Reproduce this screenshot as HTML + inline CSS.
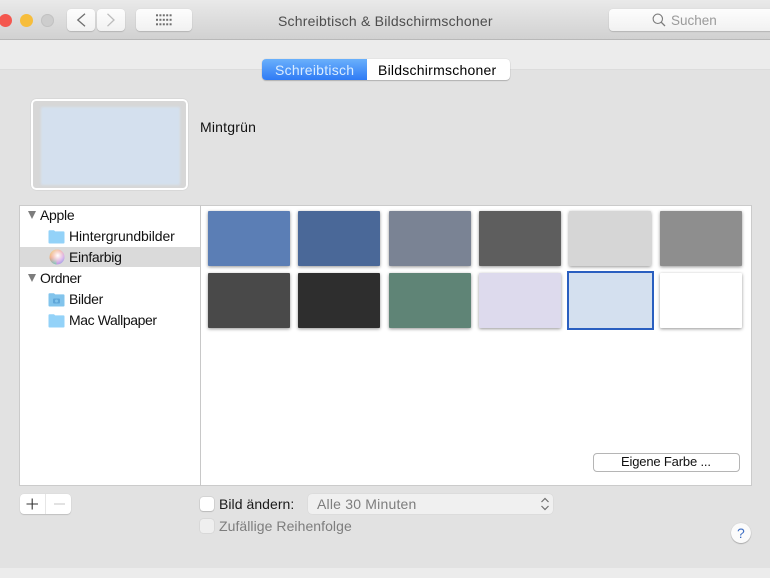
<!DOCTYPE html>
<html lang="de">
<head>
<meta charset="utf-8">
<title>Schreibtisch &amp; Bildschirmschoner</title>
<style>
html,body{margin:0;padding:0;background:#e2e2e2;}
#p{position:relative;width:770px;height:578px;overflow:hidden;background:#e2e2e2;font-family:"Liberation Sans",sans-serif;font-size:14px;color:#111;filter:blur(.35px);}
#p div,#p span.t,#p svg{position:absolute;}
.t{white-space:nowrap;line-height:16px;}
.btn{background:linear-gradient(#fdfdfd,#f1f1f1);border-radius:4px;box-shadow:0 1px 1px rgba(0,0,0,.14),0 0 1px rgba(0,0,0,.1);}
.sw{width:82px;height:55px;border-radius:1px;box-shadow:0 1px 3px rgba(0,0,0,.42);}
.dot{border-radius:50%;width:13px;height:13px;top:13.5px;}
.tri{width:0;height:0;border-left:4px solid transparent;border-right:4px solid transparent;border-top:8px solid #7d7d7d;}
</style>
</head>
<body>
<div id="p">
  <div style="left:0;top:0;width:770px;height:39px;background:linear-gradient(#e9e9e9,#d1d1d1);border-bottom:1px solid #b8b8b8;"></div>
  <div style="left:0;top:40px;width:770px;height:29px;background:#ececec;border-bottom:1px solid #dcdcdc;"></div>
  <div style="left:0;top:568px;width:770px;height:10px;background:#ececec;"></div>

  <div class="dot" style="left:-1.5px;background:#f4574f;"></div>
  <div class="dot" style="left:19.5px;background:#f6bd3b;"></div>
  <div class="dot" style="left:40.5px;background:#cdcdcd;box-shadow:inset 0 0 0 1px #c2c2c2;"></div>

  <div class="btn" style="left:67px;top:9px;width:28px;height:22px;"></div>
  <svg style="left:67px;top:9px;" width="28" height="22" viewBox="0 0 28 22"><path d="M18 4.8 L10.8 11 L18 17.2" fill="none" stroke="#6f6f6f" stroke-width="1.3"/></svg>
  <div class="btn" style="left:97px;top:9px;width:28px;height:22px;"></div>
  <svg style="left:97px;top:9px;" width="28" height="22" viewBox="0 0 28 22"><path d="M10.5 4.8 L17 11 L10.5 17.2" fill="none" stroke="#bcbcbc" stroke-width="1.3"/></svg>
  <div class="btn" style="left:136px;top:9px;width:56px;height:22px;"></div>
  <svg style="left:156px;top:14px;" width="17" height="12" viewBox="0 0 17 12" fill="#6f6f6f">
    <rect x="0" y="0.3" width="2" height="2"/><rect x="3.4" y="0.3" width="2" height="2"/><rect x="6.8" y="0.3" width="2" height="2"/><rect x="10.2" y="0.3" width="2" height="2"/><rect x="13.6" y="0.3" width="2" height="2"/>
    <rect x="0" y="4.8" width="2" height="2"/><rect x="3.4" y="4.8" width="2" height="2"/><rect x="6.8" y="4.8" width="2" height="2"/><rect x="10.2" y="4.8" width="2" height="2"/><rect x="13.6" y="4.8" width="2" height="2"/>
    <rect x="0" y="9.3" width="2" height="2"/><rect x="3.4" y="9.3" width="2" height="2"/><rect x="6.8" y="9.3" width="2" height="2"/><rect x="10.2" y="9.3" width="2" height="2"/><rect x="13.6" y="9.3" width="2" height="2"/>
  </svg>

  <span class="t" style="left:278px;top:13px;font-size:14px;letter-spacing:.22px;color:#4d4d4d;">Schreibtisch &amp; Bildschirmschoner</span>

  <div class="btn" style="left:609px;top:9px;width:175px;height:22px;"></div>
  <svg style="left:651px;top:12px;" width="16" height="16" viewBox="0 0 16 16"><circle cx="6.8" cy="6.8" r="4.7" fill="none" stroke="#7b7b7b" stroke-width="1.1"/><path d="M10.2 10.2 L14 14" stroke="#7b7b7b" stroke-width="1.3"/></svg>
  <span class="t" style="left:671px;top:13px;color:#9a9a9a;font-size:13.5px;">Suchen</span>

  <div style="left:262px;top:59px;width:248px;height:21px;background:#fff;border-radius:4px;box-shadow:0 1px 1px rgba(0,0,0,.2),0 0 1px rgba(0,0,0,.18);"></div>
  <div style="left:262px;top:59px;width:105px;height:21px;background:linear-gradient(#6ab0fb,#2f7bf5);border-radius:4px 0 0 4px;"></div>
  <span class="t" style="left:275px;top:62px;color:#d9ecff;letter-spacing:.25px;">Schreibtisch</span>
  <span class="t" style="left:378px;top:62px;color:#000;letter-spacing:.24px;">Bildschirmschoner</span>

  <div style="left:31px;top:99px;width:153px;height:87px;background:#d7d7d7;border:2px solid #fff;border-radius:5px;box-shadow:0 0 1px rgba(0,0,0,.25);"></div>
  <div style="left:41px;top:107px;width:139px;height:78px;background:#d4e0ee;filter:blur(1px);"></div>
  <span class="t" style="left:200px;top:119px;letter-spacing:.2px;">Mintgrün</span>

  <div style="left:19px;top:205px;width:731px;height:279px;background:#fff;border:1px solid #cbcbcb;"></div>
  <div style="left:200px;top:205px;width:1px;height:281px;background:#c8c8c8;"></div>
  <div style="left:20px;top:247px;width:180px;height:20px;background:#dadada;"></div>

  <div class="tri" style="left:28px;top:211px;"></div>
  <span class="t" style="left:40px;top:207px;letter-spacing:-.3px;">Apple</span>
  <svg style="left:48px;top:228.5px;" width="17" height="15" viewBox="0 0 17 15"><path d="M0.5 2.2 Q0.5 1.2 1.5 1.2 H6 L7.2 2.4 H15.5 Q16.5 2.4 16.5 3.4 V13.5 Q16.5 14.5 15.5 14.5 H1.5 Q0.5 14.5 0.5 13.5 Z" fill="#93d2f8"/></svg>
  <span class="t" style="left:69px;top:228px;letter-spacing:-.1px;">Hintergrundbilder</span>
  <svg style="left:49px;top:249px;" width="16" height="16" viewBox="0 0 16 16"><defs><radialGradient id="w" cx=".55" cy=".4" r=".6"><stop offset="0" stop-color="#fff"/><stop offset="1" stop-color="#fff" stop-opacity="0"/></radialGradient><linearGradient id="c" x1="0" y1="0" x2="1" y2="1"><stop offset="0" stop-color="#e9d36a"/><stop offset=".4" stop-color="#ef8f7f"/><stop offset=".7" stop-color="#c98ee0"/><stop offset="1" stop-color="#7fa5e8"/></linearGradient><linearGradient id="g" x1="0" y1="1" x2="0" y2="0"><stop offset="0" stop-color="#7fc7b0"/><stop offset="1" stop-color="#7fc7b0" stop-opacity="0"/></linearGradient></defs><circle cx="8" cy="8" r="7.5" fill="url(#c)"/><path d="M.5 8a7.5 7.5 0 0 0 7 7.5V8z" fill="url(#g)"/><circle cx="8" cy="8" r="7.5" fill="url(#w)"/></svg>
  <span class="t" style="left:69px;top:249px;letter-spacing:-.3px;">Einfarbig</span>

  <div class="tri" style="left:28px;top:274px;"></div>
  <span class="t" style="left:40px;top:270px;letter-spacing:-.4px;">Ordner</span>
  <svg style="left:48px;top:291.5px;" width="17" height="15" viewBox="0 0 17 15"><path d="M0.5 2.2 Q0.5 1.2 1.5 1.2 H6 L7.2 2.4 H15.5 Q16.5 2.4 16.5 3.4 V13.5 Q16.5 14.5 15.5 14.5 H1.5 Q0.5 14.5 0.5 13.5 Z" fill="#82c4ec"/><rect x="5" y="6.5" width="7" height="5" rx="1" fill="#5fa6d8"/><circle cx="8.5" cy="9" r="1.5" fill="#82c4ec"/></svg>
  <span class="t" style="left:69px;top:291px;letter-spacing:-.3px;">Bilder</span>
  <svg style="left:48px;top:312.5px;" width="17" height="15" viewBox="0 0 17 15"><path d="M0.5 2.2 Q0.5 1.2 1.5 1.2 H6 L7.2 2.4 H15.5 Q16.5 2.4 16.5 3.4 V13.5 Q16.5 14.5 15.5 14.5 H1.5 Q0.5 14.5 0.5 13.5 Z" fill="#93d2f8"/></svg>
  <span class="t" style="left:69px;top:312px;letter-spacing:-.4px;">Mac Wallpaper</span>

  <div class="sw" style="left:208px;top:211px;background:#5b7eb5;"></div>
  <div class="sw" style="left:298px;top:211px;background:#4a6898;"></div>
  <div class="sw" style="left:388.5px;top:211px;background:#7a8394;"></div>
  <div class="sw" style="left:478.5px;top:211px;background:#5e5e5e;"></div>
  <div class="sw" style="left:569px;top:211px;background:#d6d6d6;"></div>
  <div class="sw" style="left:659.5px;top:211px;background:#8e8e8e;"></div>

  <div class="sw" style="left:208px;top:273px;background:#494949;"></div>
  <div class="sw" style="left:298px;top:273px;background:#2e2e2e;"></div>
  <div class="sw" style="left:388.5px;top:273px;background:#5f8476;"></div>
  <div class="sw" style="left:478.5px;top:273px;background:#dddaed;"></div>
  <div style="left:567px;top:270.5px;width:83px;height:55.5px;background:#d4e0ef;border:2px solid #2a5fc0;"></div>
  <div class="sw" style="left:659.5px;top:273px;background:#fff;"></div>

  <div style="left:593px;top:453px;width:145px;height:17px;background:#fff;border:1px solid #b5b5b5;border-radius:4px;"></div>
  <span class="t" style="left:621px;top:454px;font-size:13px;letter-spacing:-.17px;">Eigene Farbe ...</span>

  <div class="btn" style="left:20px;top:494px;width:51px;height:20px;background:#fff;"></div>
  <div style="left:45px;top:494px;width:1px;height:20px;background:#e6e6e6;"></div>
  <svg style="left:20px;top:494px;" width="51" height="20" viewBox="0 0 51 20"><path d="M6.5 10 H18 M12.2 4.5 V15.5" stroke="#333" stroke-width="1.1"/><path d="M34 10 H45" stroke="#c9c9c9" stroke-width="1.1"/></svg>

  <div style="left:200px;top:497px;width:14px;height:14px;background:#fff;border-radius:3px;box-shadow:0 0 1px rgba(0,0,0,.4),0 1px 1px rgba(0,0,0,.12);"></div>
  <span class="t" style="left:219px;top:496px;color:#1a1a1a;letter-spacing:.05px;">Bild ändern:</span>
  <div style="left:200px;top:519px;width:14px;height:14px;background:#efefef;border-radius:3px;box-shadow:0 0 1px rgba(0,0,0,.25);"></div>
  <span class="t" style="left:219px;top:518px;color:#7d7d7d;letter-spacing:.06px;">Zufällige Reihenfolge</span>

  <div style="left:308px;top:494px;width:245px;height:19.5px;background:#f0f0f0;border-radius:4px;box-shadow:0 0 1px rgba(0,0,0,.15);"></div>
  <span class="t" style="left:317px;top:496px;color:#7d7d7d;letter-spacing:.2px;">Alle 30 Minuten</span>
  <svg style="left:539px;top:496px;" width="12" height="16" viewBox="0 0 12 16"><path d="M2.5 6 L6 2.5 L9.5 6 M2.5 10 L6 13.5 L9.5 10" fill="none" stroke="#6f6f6f" stroke-width="1.2"/></svg>

  <div style="left:731px;top:523px;width:20px;height:20px;background:#fbfbfb;border-radius:50%;box-shadow:0 1px 1px rgba(0,0,0,.22),0 0 1px rgba(0,0,0,.2);"></div>
  <span class="t" style="left:737px;top:525px;font-size:14px;color:#3f6fc4;">?</span>
</div>
</body>
</html>
